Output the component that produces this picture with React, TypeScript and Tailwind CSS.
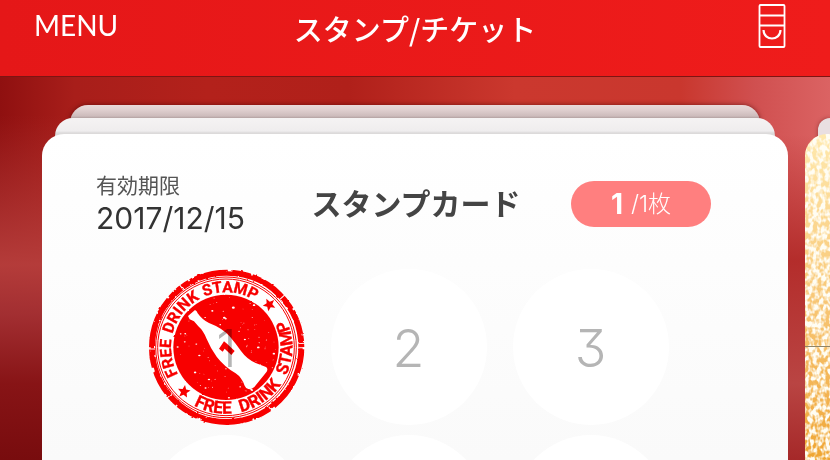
import React from "react";

const jp = "font-['Noto_Sans_CJK_JP',sans-serif]";

function seeded(seed: number) {
  let s = seed;
  return () => {
    s = (s * 16807) % 2147483647;
    return s / 2147483647;
  };
}

const rand = seeded(41);
const speckles = Array.from({ length: 110 }, () => {
  const angle = rand() * Math.PI * 2;
  const radius = 60 + rand() * 94;
  return {
    x: 273 + Math.cos(angle) * radius,
    y: 262 + Math.sin(angle) * radius,
    r: 0.8 + rand() * rand() * 4,
  };
});

function Star({ x, y, turn }: { x: number; y: number; turn: number }) {
  const points = Array.from({ length: 10 }, (_, i) => {
    const r = i % 2 ? 9 : 20;
    const a = (i * Math.PI) / 5 - Math.PI / 2;
    return `${Math.cos(a) * r},${Math.sin(a) * r}`;
  }).join(" ");
  return <polygon points={points} fill="#f80000" transform={`translate(${x} ${y}) rotate(${turn})`} />;
}

function DrinkStamp() {
  return (
    <svg
      viewBox="42 27 468 468"
      role="img"
      aria-label="Free drink stamp"
      className="absolute inset-0 size-full mix-blend-multiply"
    >
      <defs>
        <path id="upperArc" d="M273 427 A165 165 0 0 1 273 97 A165 165 0 0 1 438 262" />
        <path id="lowerArc" d="M74 262 A199 199 0 0 0 472 262 A199 199 0 0 0 273 63" />
        <filter id="rough" x="-5%" y="-5%" width="110%" height="110%">
          <feTurbulence type="fractalNoise" baseFrequency="0.06" numOctaves="2" seed="5" />
          <feDisplacementMap in="SourceGraphic" scale="7" xChannelSelector="R" yChannelSelector="G" />
        </filter>
        <filter id="worn" x="-5%" y="-5%" width="110%" height="110%">
          <feTurbulence type="fractalNoise" baseFrequency="0.09" numOctaves="2" seed="8" />
          <feDisplacementMap in="SourceGraphic" scale="5" xChannelSelector="R" yChannelSelector="G" />
        </filter>
      </defs>
      <circle cx="273" cy="262" r="228" fill="white" />
      <g filter="url(#rough)" fill="none">
        <circle cx="275" cy="262" r="224" stroke="#f80000" strokeWidth="18" />
        <circle cx="275" cy="262" r="232" stroke="white" strokeWidth="8" strokeDasharray="6 76 5 120 14 58 5 160" />
        <circle cx="275" cy="262" r="225" stroke="white" strokeWidth="20" strokeDasharray="3 210 3 330 3 150" />
      </g>
      <circle cx="273" cy="262" r="211" fill="none" stroke="#f80000" strokeWidth="3" />
      <circle cx="273" cy="262" r="205" fill="none" stroke="#f80000" strokeWidth="3" />
      <g filter="url(#worn)">
        <circle cx="273" cy="262" r="158" fill="#f80000" />
        {speckles.map((s, i) => (
          <ellipse key={i} cx={s.x} cy={s.y} rx={s.r} ry={s.r * 0.7} fill="white" />
        ))}
      </g>
      <g
        fill="#f80000"
        stroke="#f80000"
        strokeWidth="1"
        fontWeight="700"
        className="font-['Roboto',sans-serif]"
      >
        <g fontSize="47">
          <text><textPath href="#upperArc" startOffset="174">FREE</textPath></text>
          <text><textPath href="#upperArc" startOffset="299">DRINK</textPath></text>
          <text><textPath href="#upperArc" startOffset="451">STAMP</textPath></text>
        </g>
        <g fontSize="51">
          <text><textPath href="#lowerArc" startOffset="212">FREE</textPath></text>
          <text><textPath href="#lowerArc" startOffset="358">DRINK</textPath></text>
          <text><textPath href="#lowerArc" startOffset="537">STAMP</textPath></text>
        </g>
      </g>
      <Star x={403} y={134} turn={45} />
      <Star x={147} y={395} turn={-135} />
      <path
        fill="white"
        d="M159 168 L180 150 Q186 152 188 160 Q202 180 222 189 Q262 204 285 230 Q302 250 318 273 Q336 298 362 309 L393 321 Q400 326 395 335 L358 381 Q350 389 340 387 Q332 385 329 377 Q320 352 302 340 Q266 318 245 290 Q227 266 214 235 Q205 212 190 199 L177 184 L164 178 Z"
      />
      <path fill="#f80000" d="M252 266 L267 244 L276 251 L299 273 L289 285 L269 266 L263 275 Z" />
    </svg>
  );
}

function BottleTicketIcon() {
  return (
    <svg viewBox="0 0 28 44" className="h-11 w-7" fill="none" stroke="white" aria-hidden="true">
      <rect x="1.5" y="1" width="25" height="42" rx="1" strokeWidth="1.8" />
      <path d="M1.5 11.5H26.5M1.5 21.5H26.5" strokeWidth="1.8" />
      <path d="M5.5 26C5.8 37.3 22.2 37.3 22.5 26" strokeWidth="2.2" />
    </svg>
  );
}

function LeatherTexture() {
  return (
    <svg className="absolute inset-0 size-full" aria-hidden="true">
      <filter id="leather" x="0" y="0" width="100%" height="100%">
        <feTurbulence type="fractalNoise" baseFrequency="0.24 0.17" numOctaves="2" seed="12" />
        <feColorMatrix values="0 0 0 0 1  0 0 0 0 0.98  0 0 0 0 0.9  4 0 0 0 -1.5" />
      </filter>
      <rect width="100%" height="100%" filter="url(#leather)" />
    </svg>
  );
}

function StackEdges() {
  return (
    <>
      <div className="mx-7 -mb-[27px] h-10 shrink-0 rounded-t-[18px] bg-[linear-gradient(#e9dada_0px,#dfcfcf_5px,#cdbcbc_11px,#b3a1a1_13px)] shadow-[0_0_5px_rgba(60,0,0,0.6)]" />
      <div className="mx-[13px] -mb-6 h-10 shrink-0 rounded-t-[18px] bg-[linear-gradient(#f5f3f3_0px,#efedee_13px,#dcdada_15px,#dcdada_16px)]" />
    </>
  );
}

function Slot({ n, stamped }: { n?: number; stamped?: boolean }) {
  return (
    <li className="relative flex size-[156px] items-center justify-center rounded-full bg-white">
      <span className="pt-1 font-['Inter',sans-serif] text-[52px] leading-[60px] font-light text-[#b5b5b5] [font-feature-settings:'cv09']">
        {n}
      </span>
      {stamped && <DrinkStamp />}
    </li>
  );
}

export default function App() {
  return (
    <div className="flex h-screen flex-col overflow-hidden bg-[#a81c1b]">
      <header className="grid h-[77px] shrink-0 grid-cols-[1fr_auto_1fr] items-start border-b border-[#7d1513] bg-linear-to-r from-[#e51718] to-[#ef1c1b] px-[34px] text-white">
        <button type="button" className="mt-[9px] justify-self-start font-['Lato',sans-serif] text-[28px] leading-8">
          MENU
        </button>
        <h1 className={`mt-2 text-[29px] leading-10 font-medium ${jp}`}>スタンプ/チケット</h1>
        <button type="button" aria-label="チケット" className="mt-1 mr-[10px] justify-self-end">
          <BottleTicketIcon />
        </button>
      </header>

      <main className="flex min-h-0 grow gap-[17px] overflow-hidden pt-7 pl-[42px] bg-no-repeat bg-[linear-gradient(to_bottom,transparent_10%,rgba(182,62,60,0.95)_49%,rgba(163,48,51,0.95)_62%,rgba(135,20,22,0.97)_80%,rgba(120,12,14,1)),linear-gradient(to_bottom,transparent_15%,rgba(176,40,38,0.9)_48%,rgba(182,66,64,0.9)_80%,rgba(160,35,35,0.9)),linear-gradient(to_right,#8f1010,#a81e1a_9%,#b3211b_25%,#b0201a_42%,#cb382e_62%,#c9372e_82%,#d05050_91%,#db6363)] bg-size-[60px_100%,60px_100%,100%_100%] bg-position-[0_0,100%_0,0_0]">
        <article className="flex min-w-0 grow flex-col">
          <StackEdges />
          <div className="grow rounded-t-[22px] bg-linear-to-b from-white to-[#f8f8f8] pt-9">
            <div className="flex items-center justify-between pr-[77px] pl-[54px]">
              <p>
                <span className={`block text-[21px] leading-7 font-normal text-[#555] ${jp}`}>有効期限</span>
                <time dateTime="2017-12-15" className="block font-['Inter',sans-serif] text-[30px] leading-10 text-[#333]">
                  2017/12/15
                </time>
              </p>
              <h2 className={`pb-1 pl-4 text-[30px] leading-10 font-bold text-[#444] ${jp}`}>スタンプカード</h2>
              <p className="flex h-[46px] w-[140px] items-center justify-center gap-2 rounded-full bg-[#ff7f7f] font-['Inter','Noto_Sans_CJK_JP',sans-serif] text-white">
                <span className="text-[28px] leading-10 font-bold">1</span>
                <span className="text-[23px] leading-10 font-light">/1枚</span>
              </p>
            </div>
            <ol className="mt-[31px] grid grid-cols-[repeat(3,156px)] justify-center gap-x-[26px] gap-y-[10px] pr-[13px]">
              <Slot n={1} stamped />
              <Slot n={2} />
              <Slot n={3} />
              <Slot />
              <Slot />
              <Slot />
            </ol>
          </div>
        </article>

        <aside className="flex w-[25px] shrink-0 flex-col">
          <div className="ml-[13px] mt-[13px] -mb-6 h-10 shrink-0 rounded-tl-[18px] bg-[#e9dfe1] shadow-[0_0_4px_rgba(60,0,0,0.4)]" />
          <div className="relative flex grow flex-col overflow-hidden rounded-tl-[22px] bg-linear-to-b from-[#ffe9ae] to-[#efa530]">
            <LeatherTexture />
            <hr className="relative mt-[212px] border-t border-[#8f8468]" />
          </div>
        </aside>
      </main>
    </div>
  );
}
